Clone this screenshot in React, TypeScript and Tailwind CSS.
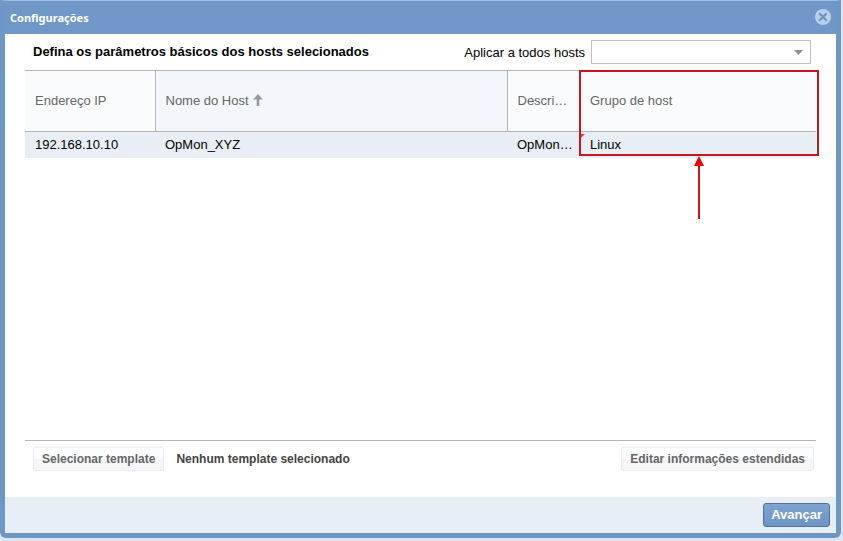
import { useState } from "react";

const columns = ["Endereço IP", "Nome do Host", "Descrição", "Grupo de host"];

const hosts = [
  { ip: "192.168.10.10", name: "OpMon_XYZ", description: "OpMon_XYZ", group: "Linux" },
];

const groups = ["", "Linux", "Windows"];

function SortArrow() {
  return (
    <svg className="ml-1 inline-block h-3 w-2.5 align-[-1px]" viewBox="0 0 10 12" aria-hidden="true">
      <path d="M5 0 L10 5.5 H6.3 V12 H3.7 V5.5 H0 Z" fill="#999999" />
    </svg>
  );
}

function TitleBar() {
  return (
    <header className="flex h-[33px] items-center justify-between px-[5px]">
      <h1 className="font-['Noto_Sans','Open_Sans',sans-serif] text-[11px] leading-4 font-bold text-white">
        Configurações
      </h1>
      <button type="button" aria-label="Fechar" className="mb-0.5 size-4">
        <svg viewBox="0 0 16 16" className="size-4" aria-hidden="true">
          <circle cx="8" cy="8" r="8" fill="#b8d0ee" />
          <path d="M4.2 4.2 L11.8 11.8 M11.8 4.2 L4.2 11.8" stroke="#7191b9" strokeWidth="2" />
        </svg>
      </button>
    </header>
  );
}

function GroupHighlight() {
  return (
    <div className="pointer-events-none absolute top-0 -right-[3px] w-60">
      <div className="h-[86px] border-2 border-[#c8161d]" />
      <svg className="mx-auto h-16 w-3" viewBox="0 0 12 64" aria-hidden="true">
        <path d="M6 8 V63" stroke="#e0101a" strokeWidth="2" />
        <path d="M6 0 L11 10 H1 Z" fill="#ee0000" />
      </svg>
    </div>
  );
}

function HostTable() {
  return (
    <div className="relative flex-1 border-b border-[#b5b5b5]">
      <table className="w-full table-fixed border-collapse text-left text-[13px] leading-4">
        <colgroup>
          <col className="w-[130px]" />
          <col />
          <col className="w-[73px]" />
          <col className="w-[236px]" />
        </colgroup>
        <thead>
          <tr className="h-[61px] border-y border-[#b5b5b5] bg-[#fafbfd] text-[#666666]">
            {columns.map((label, i) => (
              <th
                key={label}
                aria-sort={i === 1 ? "ascending" : undefined}
                className={`truncate px-2.5 font-normal ${i === 1 || i === 2 ? "border-l border-[#b5b5b5]" : ""} ${i === 1 ? "bg-[#f3f6fb]" : ""}`}
              >
                {label}
                {i === 1 && <SortArrow />}
              </th>
            ))}
          </tr>
        </thead>
        <tbody>
          {hosts.map((host) => (
            <tr key={host.ip} className="h-[26px] bg-[#e7eef6] text-black">
              <td className="truncate px-2.5">{host.ip}</td>
              <td className="truncate px-2.5">{host.name}</td>
              <td className="truncate pr-1 pl-2.5">{host.description}</td>
              <td className="relative truncate px-2.5">
                <svg className="absolute top-0.5 left-0 size-[5px]" viewBox="0 0 5 5" aria-hidden="true">
                  <path d="M0 0 H5 L0 5 Z" fill="#dc4040" />
                </svg>
                {host.group}
              </td>
            </tr>
          ))}
        </tbody>
      </table>
      <GroupHighlight />
    </div>
  );
}

const plainButton =
  "h-6 rounded-xs border border-[#e8edf3] bg-linear-to-b from-[#fbfcfd] from-50% to-[#f4f6f8] to-50% px-2 text-[12px] leading-4 font-bold text-[#666666]";

export default function App() {
  const [group, setGroup] = useState("");

  return (
    <div className="flex min-h-screen flex-col bg-[#dfe6f0] pr-0.5 pb-[3px] font-['Liberation_Sans',Arial,sans-serif]">
      <section className="flex flex-1 flex-col rounded-b-md border-5 border-t border-[#6f97c6] border-t-[#9dbce0] bg-[#6f97c8]">
        <TitleBar />
        <main className="flex flex-1 flex-col bg-white px-5">
          <div className="flex h-9 items-center justify-between pr-[5px] pl-2 text-[13px] leading-4">
            <h2 className="font-bold text-black">Defina os parâmetros básicos dos hosts selecionados</h2>
            <div className="flex items-center gap-1.5">
              <label htmlFor="group" className="pt-0.5 text-black">
                Aplicar a todos hosts
              </label>
              <div className="relative">
                <select
                  id="group"
                  value={group}
                  onChange={(e) => setGroup(e.target.value)}
                  className="block h-6 w-[220px] appearance-none border border-[#c0c0c0] bg-white px-2 text-[13px]"
                >
                  {groups.map((name) => (
                    <option key={name} value={name}>
                      {name}
                    </option>
                  ))}
                </select>
                <svg
                  className="pointer-events-none absolute top-2.5 right-2 h-[5px] w-[9px]"
                  viewBox="0 0 9 5"
                  aria-hidden="true"
                >
                  <path d="M0 0 H9 L4.5 5 Z" fill="#8e8e8e" />
                </svg>
              </div>
            </div>
          </div>
          <HostTable />
          <div className="flex items-start justify-between pt-1.5 pr-0.5 pb-[26px] pl-2">
            <div className="flex items-center gap-3">
              <button type="button" className={plainButton}>
                Selecionar template
              </button>
              <span className="text-[12px] leading-4 font-bold text-[#444444]">Nenhum template selecionado</span>
            </div>
            <button type="button" className={plainButton}>
              Editar informações estendidas
            </button>
          </div>
        </main>
        <footer className="flex justify-end bg-[#e7eef6] px-1.5 py-1.5">
          <button
            type="button"
            className="h-6 rounded-[3px] border border-[#4d719c] bg-linear-to-b from-[#7fa3d0] to-[#6c94c4] px-[7px] text-[13px] leading-4 font-bold text-white"
          >
            Avançar
          </button>
        </footer>
      </section>
    </div>
  );
}
